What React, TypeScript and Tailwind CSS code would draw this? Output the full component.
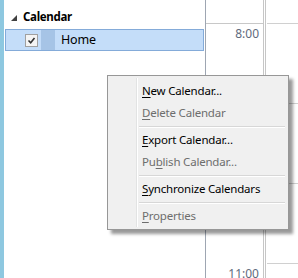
import React from 'react';

const items: ({ type: 'item'; pre: string; key: string; post: string; disabled?: boolean } | { type: 'sep' })[] = [
  { type: 'item', pre: '', key: 'N', post: 'ew Calendar...' },
  { type: 'item', pre: '', key: 'D', post: 'elete Calendar', disabled: true },
  { type: 'sep' },
  { type: 'item', pre: '', key: 'E', post: 'xport Calendar...' },
  { type: 'item', pre: 'Pu', key: 'b', post: 'lish Calendar...', disabled: true },
  { type: 'sep' },
  { type: 'item', pre: '', key: 'S', post: 'ynchronize Calendars' },
  { type: 'sep' },
  { type: 'item', pre: '', key: 'P', post: 'roperties', disabled: true },
];

function ContextMenu() {
  return (
    <div className="absolute left-[107px] top-[75px] w-[182px] h-[155px] border border-[#979797] bg-[#f0f0f0] p-[2px] shadow-[4px_4px_3px_rgba(0,0,0,0.4)] flex">
      <div className="w-[26px] shrink-0" />
      <div className="flex-1 border-l border-[#e2e3e3] shadow-[inset_1px_0_0_#ffffff] pt-[2px]">
        {items.map((it, i) =>
          it.type === 'sep' ? (
            <div key={i} className="h-[5px] flex items-center pl-[2px] pr-[1px]">
              <div className="w-full border-t border-[#d7d7d7] shadow-[0_1px_0_#ffffff]" />
            </div>
          ) : (
            <div
              key={i}
              className={`h-[22px] flex items-center pl-[5px] text-[11.5px] tracking-[-0.2px] ${it.disabled ? 'text-[#6d6d6d]' : 'text-black'}`}
            >
              {it.pre}
              <span className="underline underline-offset-2">{it.key}</span>
              {it.post}
            </div>
          )
        )}
      </div>
    </div>
  );
}

export default function App() {
  return (
    <div
      className="relative w-[298px] h-[278px] overflow-hidden bg-white flex"
      style={{ fontFamily: '"Noto Sans", "Segoe UI", sans-serif' }}
    >
      {/* folder pane */}
      <div className="w-[205px] shrink-0 border-l-4 border-[#8ec8e0] pt-[7px] pl-[1px] pr-[1px]">
        <div className="h-[20px] flex items-center">
          <svg width="6" height="6" viewBox="0 0 6 6" className="ml-[6px] mt-[1px]">
            <polygon points="6,0 6,6 0,6" fill="#404040" />
          </svg>
          <span className="ml-[6px] text-[11.5px] tracking-[-0.3px] font-bold text-black">Calendar</span>
        </div>
        <div className="mt-[2px] h-[22px] border border-[#84abd9] bg-[#c4ddf9] flex items-stretch">
          <div className="w-[19px]" />
          <div className="flex items-center">
            <div className="w-[13px] h-[13px] border border-[#a0a0a0] bg-[#f4f4f4] flex items-center justify-center">
              <svg width="9" height="9" viewBox="0 0 9 9">
                <path d="M1.5 4.5 L3.7 6.7 L7.5 2" stroke="#333" strokeWidth="1.6" fill="none" />
              </svg>
            </div>
          </div>
          <div className="ml-[3px] w-[14px] bg-[#a6c4e6]" />
          <span className="ml-[6px] flex items-center text-[12.5px] tracking-[-0.2px] text-black">Home</span>
        </div>
      </div>

      {/* time ruler */}
      <div className="w-[58px] shrink-0 border-l border-[#9ea6b2]">
        <div className="h-[23px]" />
        <div className="h-[80px] border-t border-[#c8c8c8] flex justify-end pr-[4px] pt-[3px] text-[12px] leading-[14px] text-[#5e6a7c]">
          8:00
        </div>
        <div className="h-[80px]" />
        <div className="h-[80px]" />
        <div className="h-[80px] flex justify-end pr-[4px] pt-[4px] text-[12px] leading-[14px] text-[#5e6a7c]">
          11:00
        </div>
      </div>

      {/* day column */}
      <div className="w-[1px] shrink-0 bg-[#c6c6c6]" />
      <div className="w-[1px] shrink-0 bg-white" />
      <div className="w-[1px] shrink-0 bg-[#c6c6c6]" />
      <div className="flex-1 pl-[1px]">
        <div className="h-[23px]" />
        <div className="h-[80px] border-t border-[#d0d0d0]" />
        <div className="h-[80px] border-t border-[#d0d0d0]" />
        <div className="h-[80px] border-t border-[#d0d0d0]" />
        <div className="h-[80px] border-t border-[#d0d0d0]" />
      </div>

      <ContextMenu />
    </div>
  );
}
